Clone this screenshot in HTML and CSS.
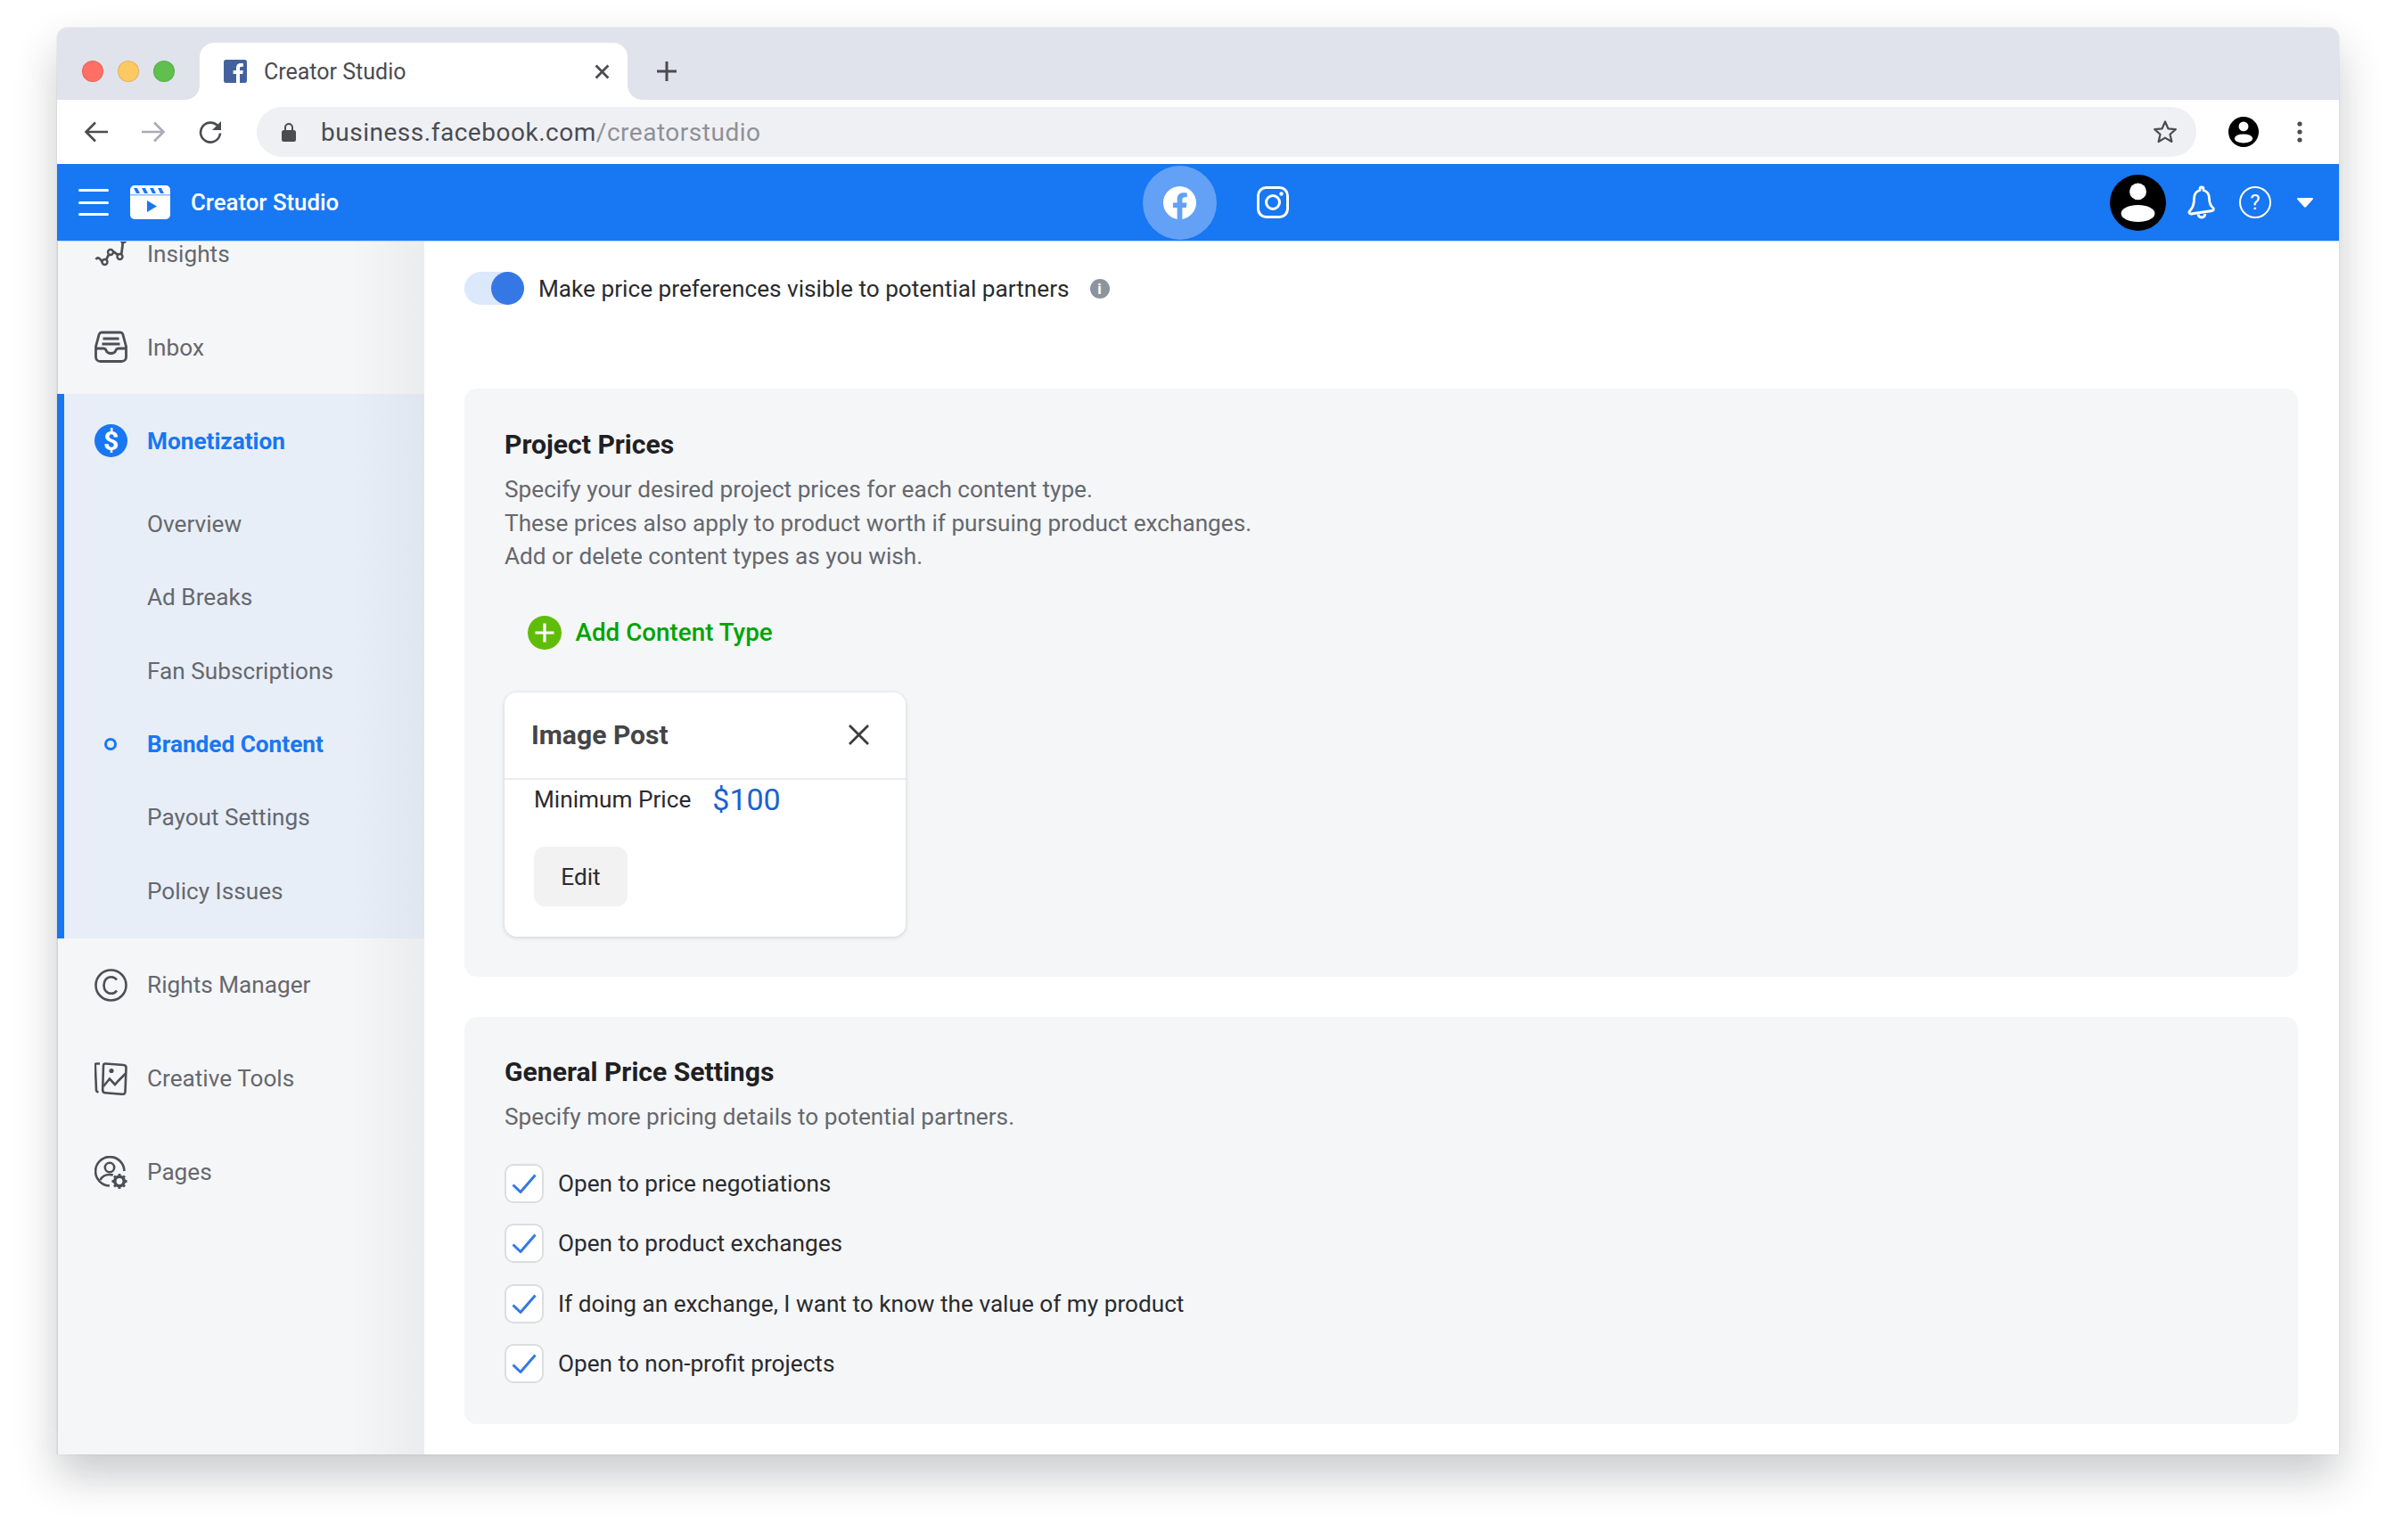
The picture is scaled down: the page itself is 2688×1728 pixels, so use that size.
FILE: index.html
```html
<!DOCTYPE html>
<html lang="en">
<head>
<meta charset="utf-8">
<title>Creator Studio</title>
<link rel="stylesheet" href="styles.css">
</head>
<body>
<div class="window">
  <div class="tabstrip">
    <div class="lights"><span class="light red"></span><span class="light yellow"></span><span class="light green"></span></div>
    <div class="tab">
      <svg class="tab-fb" viewBox="0 0 26 26"><rect width="26" height="26" rx="2.5" fill="#45619d"/><path d="M18 26V16h3.3l.5-4H18V9.6c0-1.1.4-1.9 2-1.9h2V4.2c-.4 0-1.600-.2-3-.2-3 0-5 1.800-5 5.100V12h-3.400v4H14v10z" fill="#fff"/></svg>
      <span class="tab-title">Creator Studio</span>
      <svg class="tab-close" viewBox="0 0 16 16"><path d="M1.500 1.500l13 13M14.500 1.500l-13 13" stroke="#4b4c50" stroke-width="2.600" fill="none"/></svg>
    </div>
    <svg class="new-tab" viewBox="0 0 24 24"><path d="M12 1v22M1 12h22" stroke="#4b4c50" stroke-width="3" fill="none"/></svg>
  </div>

  <div class="toolbar">
    <span class="tool"><svg class="tool-ic" viewBox="0 0 28 28"><path d="M27 14H3M13 3.500L2.500 14 13 24.500" stroke="#4b4c50" stroke-width="2.600" fill="none"/></svg></span>
    <span class="tool"><svg class="tool-ic" viewBox="0 0 28 28"><path d="M1 14h24M15 3.500L25.500 14 15 24.500" stroke="#a9acb6" stroke-width="2.600" fill="none"/></svg></span>
    <span class="tool"><svg class="tool-ic" viewBox="0 0 28 28"><path d="M23.500 9A11 11 0 1 0 25 15.500" stroke="#4b4c50" stroke-width="2.600" fill="none"/><path d="M26 2v10H16z" fill="#4b4c50"/></svg></span>
    <div class="omnibox">
      <svg class="lock" viewBox="0 0 16 22"><path d="M4 10V6a4 4 0 0 1 8 0v4" stroke="#4b4c50" stroke-width="2" fill="none"/><rect y="9" width="16" height="13" rx="2.500" fill="#4b4c50"/></svg>
      <span class="url">business.facebook.com<span class="url-path">/creatorstudio</span></span>
      <svg class="star" viewBox="0 0 28 28"><path d="M14 2.500l3.400 7.800 8.400.8-6.300 5.600 1.900 8.300L14 20.600 6.600 25l1.900-8.300L2.200 11.100l8.400-.8z" stroke="#4b4c50" stroke-width="2.200" fill="none" stroke-linejoin="round"/></svg>
    </div>
    <span class="tool tool-account"><svg class="acct-small" viewBox="0 0 100 100"><circle cx="50" cy="50" r="50" fill="#000"/><circle cx="50" cy="32" r="16" fill="#fff"/><ellipse cx="50" cy="72" rx="30" ry="15" fill="#fff"/></svg></span>
    <span class="tool"><svg class="dots" viewBox="0 0 6 24"><circle cx="3" cy="3" r="2.600" fill="#4b4c50"/><circle cx="3" cy="12" r="2.600" fill="#4b4c50"/><circle cx="3" cy="21" r="2.600" fill="#4b4c50"/></svg></span>
  </div>

  <header class="appbar">
    <div class="brand">
      <span class="burger"><i></i><i></i><i></i></span>
      <svg class="clap" viewBox="0 0 45 38"><rect width="45" height="38" rx="5" fill="#fff"/><path d="M4 3h4l3 6H7zM13 3h4l3 6h-4zM22 3h4l3 6h-4zM31 3h4l3 6h-4z" fill="#1877f2"/><rect x="0" y="10" width="45" height="1.500" fill="#1877f2" opacity=".5"/><path d="M19 17l11 6.500L19 30z" fill="#1877f2"/></svg>
      <span class="brand-name">Creator Studio</span>
    </div>
    <span class="platform-on"><svg class="fb-round" viewBox="0 0 24 24"><path fill="#fff" d="M24 12.073c0-6.627-5.373-12-12-12s-12 5.373-12 12c0 5.990 4.388 10.954 10.125 11.854v-8.385H7.078v-3.470h3.047V9.430c0-3.007 1.792-4.669 4.533-4.669 1.312 0 2.686.235 2.686.235v2.953H15.830c-1.491 0-1.956.925-1.956 1.874v2.250h3.328l-.532 3.470h-2.796v8.385C19.612 23.027 24 18.062 24 12.073z"/></svg></span>
    <svg class="ig" viewBox="0 0 36 36"><rect x="1.500" y="1.500" width="33" height="33" rx="9" stroke="#fff" stroke-width="3" fill="none"/><circle cx="18" cy="18" r="7.500" stroke="#fff" stroke-width="3" fill="none"/><circle cx="27.500" cy="8.500" r="2.200" fill="#fff"/></svg>
    <div class="app-actions">
      <svg class="avatar" viewBox="0 0 100 100"><circle cx="50" cy="50" r="50" fill="#000"/><ellipse cx="50" cy="30" rx="15" ry="15" fill="#fff"/><ellipse cx="50" cy="69" rx="30" ry="15" fill="#fff"/></svg>
      <svg class="bell" viewBox="0 0 32 38"><path d="M16 2c1.200 0 2 .8 2 2v1.500c4.500 1.200 6.500 5 6.500 9.500 0 5 1.500 8 4.500 10.500.9 1.300.3 2.500-1.100 3L4 32c-1.600 0-2.600-1.500-1.800-2.800C5.500 26 7.500 21.500 7.500 15c0-4.500 2-8.300 6.500-9.500V4c0-1.200.8-2 2-2z" stroke="#fff" stroke-width="2.800" fill="none" stroke-linejoin="round"/><path d="M12 32.500c.5 2.500 2 3.500 4 3.500s3.500-1.200 4-4" stroke="#fff" stroke-width="2.800" fill="none"/></svg>
      <span class="help">?</span>
      <svg class="caret" viewBox="0 0 18 11"><path d="M1 0h16c1 0 1.300 1 .7 1.700L10 10.300c-.5.600-1.500.6-2 0L.3 1.700C-.3 1 0 0 1 0z" fill="#fff"/></svg>
    </div>
  </header>

  <div class="workspace">
    <nav class="sidebar">
      <ul class="nav">
        <li class="nav-item">
          <svg class="nav-ic" viewBox="0 0 37 37"><path d="M1.500 25c2-2.500 3.500-2 5 0s3.500 4 5 3 3.500-8 6.500-11 6.500 2 10.500 5c1.500 1 2.800-9 3.500-19" stroke="#4b4f56" stroke-width="2.800" fill="none"/><circle cx="11.500" cy="28" r="3" fill="#f5f6f7" stroke="#4b4f56" stroke-width="2.400"/><circle cx="18" cy="17" r="3" fill="#f5f6f7" stroke="#4b4f56" stroke-width="2.400"/><circle cx="28.500" cy="22" r="3" fill="#f5f6f7" stroke="#4b4f56" stroke-width="2.400"/><circle cx="32.500" cy="3" r="3" fill="#f5f6f7" stroke="#4b4f56" stroke-width="2.400"/></svg>
          <span>Insights</span>
        </li>
        <li class="nav-item">
          <svg class="nav-ic" viewBox="0 0 37 37"><path d="M8 2h21c1.500 0 2.300.8 2.800 2l3.700 14v11.500c0 3-2 5-5 5H6.500c-3 0-5-2-5-5V18L5.200 4C5.700 2.800 6.500 2 8 2z" stroke="#4b4f56" stroke-width="2.800" fill="none"/><path d="M2 20h8c1.500 0 2.500.8 3 2 .8 2.500 2.500 3.500 5.500 3.500S23.200 24.500 24 22c.5-1.200 1.500-2 3-2h8" stroke="#4b4f56" stroke-width="2.800" fill="none"/><path d="M9.500 9h18M8.500 15h20" stroke="#4b4f56" stroke-width="2.800" fill="none"/></svg>
          <span>Inbox</span>
        </li>
        <li class="nav-group">
          <div class="nav-item nav-active">
            <span class="dollar">$</span>
            <span>Monetization</span>
          </div>
          <ul class="subnav">
            <li class="sub-item"><span class="slot"></span><span>Overview</span></li>
            <li class="sub-item"><span class="slot"></span><span>Ad Breaks</span></li>
            <li class="sub-item"><span class="slot"></span><span>Fan Subscriptions</span></li>
            <li class="sub-item sub-active"><span class="slot"><i class="ring"></i></span><span>Branded Content</span></li>
            <li class="sub-item"><span class="slot"></span><span>Payout Settings</span></li>
            <li class="sub-item"><span class="slot"></span><span>Policy Issues</span></li>
          </ul>
        </li>
        <li class="nav-item">
          <svg class="nav-ic" viewBox="0 0 37 37"><circle cx="18.500" cy="18.500" r="17" stroke="#4b4f56" stroke-width="2.600" fill="none"/><path d="M25 12.500c-1.500-2.200-3.800-3.300-6.300-3.300-5 0-8.200 4-8.200 9.300s3.200 9.300 8.200 9.300c2.500 0 4.800-1.100 6.300-3.300" stroke="#4b4f56" stroke-width="2.600" fill="none"/></svg>
          <span>Rights Manager</span>
        </li>
        <li class="nav-item">
          <svg class="nav-ic" viewBox="0 0 37 37"><path d="M6 1.500H2c-.8 0-1.200.5-1.200 1.300L2 31c0 1.500.5 2 2.500 2.500" stroke="#4b4f56" stroke-width="2.600" fill="none"/><path d="M12.500 1.500l20 1.500c2 .2 3 1.300 3 3l-1 27c-.1 2-1.300 3-3.300 2.800L12 34.300c-2-.2-2.800-1.300-2.800-3.300L10 3.500c.1-1.500 1-2.100 2.500-2z" stroke="#4b4f56" stroke-width="2.600" fill="none"/><path d="M10 27l7-8.500 6 6.500 4-4.500 8-8" stroke="#4b4f56" stroke-width="2.600" fill="none"/><circle cx="19" cy="9.500" r="2.600" fill="#4b4f56"/></svg>
          <span>Creative Tools</span>
        </li>
        <li class="nav-item">
          <svg class="nav-ic" viewBox="0 0 37 37"><path d="M33.500 17A16.200 16.200 0 1 0 17 33.500" stroke="#4b4f56" stroke-width="2.600" fill="none"/><circle cx="17" cy="13" r="5.200" stroke="#4b4f56" stroke-width="2.600" fill="none"/><path d="M6.500 27c2-4 5.500-6 10.500-6 1.500 0 2.500.2 3.800.6" stroke="#4b4f56" stroke-width="2.600" fill="none"/><circle cx="28" cy="28.500" r="5.200" stroke="#4b4f56" stroke-width="3.600" fill="none"/><path d="M28 20v4M28 33v4M19.500 28.500h4M32.500 28.500h4M22 22.500l3 3M31 31.500l3 3M34 22.500l-3 3M25 31.500l-3 3" stroke="#4b4f56" stroke-width="2.800"/></svg>
          <span>Pages</span>
        </li>
      </ul>
    </nav>

    <main class="content">
      <div class="visibility">
        <span class="toggle"><i class="knob"></i></span>
        <span class="visibility-label">Make price preferences visible to potential partners</span>
        <span class="info">i</span>
      </div>

      <section class="panel panel-prices">
        <h2 class="panel-title">Project Prices</h2>
        <p class="panel-desc">Specify your desired project prices for each content type.<br>These prices also apply to product worth if pursuing product exchanges.<br>Add or delete content types as you wish.</p>
        <div class="add-type">
          <svg class="add-ic" viewBox="0 0 38 38"><circle cx="19" cy="19" r="19" fill="#5fbd0a"/><path d="M19 8.500v21M8.500 19h21" stroke="#fff" stroke-width="3.200"/></svg>
          <span>Add Content Type</span>
        </div>
        <article class="price-card">
          <div class="price-card-head">
            <span class="price-card-title">Image Post</span>
            <svg class="card-close" viewBox="0 0 23 23"><path d="M1 1l21 21M22 1L1 22" stroke="#3a3b3f" stroke-width="2.800" fill="none"/></svg>
          </div>
          <div class="price-card-body">
            <div class="price-row"><span class="price-label">Minimum Price</span><span class="price-value">$100</span></div>
            <button class="edit-btn" type="button">Edit</button>
          </div>
        </article>
      </section>

      <section class="panel panel-general">
        <h2 class="panel-title">General Price Settings</h2>
        <p class="panel-desc">Specify more pricing details to potential partners.</p>
        <ul class="checks">
          <li class="check-row"><span class="checkbox"><svg class="tick" viewBox="0 0 28 22"><path d="M1.500 12.500L10 20.500 26.500 1.500" stroke="#3578e5" stroke-width="3" fill="none"/></svg></span><span>Open to price negotiations</span></li>
          <li class="check-row"><span class="checkbox"><svg class="tick" viewBox="0 0 28 22"><path d="M1.500 12.500L10 20.500 26.500 1.500" stroke="#3578e5" stroke-width="3" fill="none"/></svg></span><span>Open to product exchanges</span></li>
          <li class="check-row"><span class="checkbox"><svg class="tick" viewBox="0 0 28 22"><path d="M1.500 12.500L10 20.500 26.500 1.500" stroke="#3578e5" stroke-width="3" fill="none"/></svg></span><span>If doing an exchange, I want to know the value of my product</span></li>
          <li class="check-row"><span class="checkbox"><svg class="tick" viewBox="0 0 28 22"><path d="M1.500 12.500L10 20.500 26.500 1.500" stroke="#3578e5" stroke-width="3" fill="none"/></svg></span><span>Open to non-profit projects</span></li>
        </ul>
      </section>
    </main>
  </div>
</div>
</body>
</html>
```
FILE: styles.css
```css
* { box-sizing: border-box; }
html, body { margin: 0; padding: 0; background: #fff; }
body {
  width: 2688px;
  height: 1728px;
  padding: 31px 64px 96px;
  overflow: hidden;
  font-family: Roboto, "Liberation Sans", sans-serif;
  color: #1c1e21;
}
ul { list-style: none; margin: 0; padding: 0; }
svg { display: block; flex: none; }
i { display: block; }

.window {
  height: 1601px;
  display: flex;
  flex-direction: column;
  background: #fff;
  border-radius: 12px 12px 0 0;
  box-shadow: 0 24px 48px rgba(30, 32, 40, .24), 0 0 1px rgba(0, 0, 0, .35);
}

/* Browser chrome */
.tabstrip {
  height: 81px;
  flex: none;
  display: flex;
  align-items: flex-end;
  background: #e0e3eb;
  border-radius: 12px 12px 0 0;
}
.lights { display: flex; gap: 16px; height: 64px; align-items: center; padding: 0 28px; }
.light { width: 24px; height: 24px; border-radius: 50%; border: 1px solid rgba(0, 0, 0, .1); }
.red { background: #ff6f63; }
.yellow { background: #fdc963; }
.green { background: #5fc04f; }
.tab {
  position: relative;
  width: 480px;
  height: 64px;
  display: flex;
  align-items: center;
  padding: 0 20px 0 27px;
  background: #fff;
  border-radius: 16px 16px 0 0;
}
.tab::before, .tab::after {
  content: "";
  position: absolute;
  bottom: 0;
  width: 16px;
  height: 16px;
  background: radial-gradient(circle at var(--cx) 0, #e0e3eb 15.500px, #fff 16px);
}
.tab::before { left: -16px; --cx: 0; }
.tab::after { right: -16px; --cx: 16px; }
.tab-fb { width: 26px; height: 26px; }
.tab-title { margin-left: 19px; flex: 1; font-size: 25px; color: #4b4c50; }
.tab-close { width: 17px; height: 17px; }
.new-tab { width: 24px; height: 24px; margin: 0 0 20px 32px; }

.toolbar {
  height: 72px;
  flex: none;
  display: flex;
  align-items: center;
  padding: 0 12px 0 12px;
  background: #fff;
}
.tool { width: 64px; height: 56px; display: flex; align-items: center; justify-content: center; flex: none; }
.tool-ic { width: 28px; height: 28px; }
.omnibox {
  flex: 1;
  height: 56px;
  margin-left: 20px;
  display: flex;
  align-items: center;
  padding: 0 21px 0 28px;
  background: #eff0f4;
  border-radius: 28px;
}
.lock { width: 16px; height: 22px; }
.url { margin-left: 28px; flex: 1; font-size: 28px; letter-spacing: .52px; color: #4b4c50; }
.url-path { color: #8e9097; }
.star { width: 28px; height: 28px; }
.tool-account { margin-left: 22px; width: 62px; }
.acct-small { width: 34px; height: 34px; }
.dots { width: 6px; height: 24px; }

.appbar {
  height: 87px;
  flex: none;
  display: flex;
  align-items: center;
  padding-right: 29px;
  background: #1877f2;
  border-bottom: 1px solid #b9d6fb;
  color: #fff;
}
.brand { width: 1218px; flex: none; display: flex; align-items: center; gap: 24px; padding-left: 24px; }
.burger { width: 34px; display: flex; flex-direction: column; gap: 10.500px; }
.burger i { height: 3px; background: #fff; border-radius: 2px; }
.clap { width: 45px; height: 38px; }
.brand-name { font-size: 25.800px; font-weight: 500; margin-left: -1px; }
.platform-on {
  width: 83px;
  height: 83px;
  display: flex;
  align-items: center;
  justify-content: center;
  background: #62a1f6;
  border-radius: 50%;
}
.fb-round { width: 37px; height: 37px; }
.ig { width: 36px; height: 36px; margin-left: 45px; }
.app-actions { margin-left: auto; display: flex; align-items: center; }
.avatar { width: 63px; height: 63px; }
.bell { width: 32px; height: 38px; margin-left: 24px; }
.help {
  width: 36px;
  height: 36px;
  margin-left: 26px;
  display: flex;
  align-items: center;
  justify-content: center;
  border: 2.500px solid #fff;
  border-radius: 50%;
  font-size: 24px;
  line-height: 1;
}
.caret { width: 18px; height: 11px; margin-left: 29px; }

/* Workspace */
.workspace { flex: 1; min-height: 0; display: flex; overflow: hidden; }
.sidebar {
  width: 412px;
  flex: none;
  background: linear-gradient(to right, #f5f6f8 80%, #ebecee 100%);
  border-left: 1px solid #d4d5d8;
  font-size: 26.200px;
  color: #65686e;
}
.nav { margin: -39px 0 0 -1px; }
.nav-item { height: 105px; display: flex; align-items: center; gap: 22px; padding-left: 42px; }
.nav-ic { width: 37px; height: 37px; }
.nav-group {
  padding-bottom: 12px;
  background: linear-gradient(to right, #e8eef7 80%, #dfe6f0 100%);
  box-shadow: inset 8px 0 0 #1877f2;
}
.nav-active { color: #1877f2; font-weight: 700; }
.dollar {
  width: 37px;
  height: 37px;
  display: flex;
  align-items: center;
  justify-content: center;
  background: #1877f2;
  border-radius: 50%;
  color: #fff;
  font-size: 30px;
  font-weight: 700;
}
.sub-item { height: 82.300px; display: flex; align-items: center; gap: 22px; padding-left: 42px; }
.slot { width: 37px; display: flex; justify-content: center; }
.ring { width: 14px; height: 14px; border: 3.500px solid #1877f2; border-radius: 50%; margin-left: -1px; }
.sub-active { color: #1877f2; font-weight: 700; }

.content { flex: 1; min-width: 0; padding: 34px 46px 0 45px; background: #fff; }
.visibility { display: flex; align-items: center; height: 37px; font-size: 26.200px; color: #2a2b2e; }
.toggle { width: 67px; height: 37px; display: flex; justify-content: flex-end; background: #dce8fb; border-radius: 19px; }
.knob { width: 37px; height: 37px; background: #3578e5; border-radius: 50%; }
.visibility-label { margin-left: 16px; }
.info {
  width: 22px;
  height: 22px;
  margin-left: 23px;
  display: flex;
  align-items: center;
  justify-content: center;
  background: #8d949e;
  border-radius: 50%;
  color: #fff;
  font-size: 17px;
  font-weight: 700;
}

.panel { background: #f5f6f7; border-radius: 14px; padding-left: 45px; }
.panel-prices { margin-top: 94px; height: 660px; padding-top: 44px; }
.panel-general { margin-top: 45px; height: 457px; padding-top: 43px; }
.panel-title { margin: 0; font-size: 30.100px; line-height: 38px; font-weight: 700; color: #1f2023; }
.panel-desc { margin: 13px 0 0; font-size: 26.200px; line-height: 37.500px; color: #65686e; }

.add-type {
  margin: 47px 0 0 26px;
  height: 38px;
  display: flex;
  align-items: center;
  gap: 15.500px;
  font-size: 27.800px;
  font-weight: 500;
  color: #00a400;
}
.add-ic { width: 38px; height: 38px; }

.price-card {
  width: 450px;
  height: 274px;
  margin-top: 48px;
  background: #fff;
  border-radius: 14px;
  box-shadow: 0 1px 5px rgba(0, 0, 0, .16);
}
.price-card-head {
  height: 98px;
  display: flex;
  align-items: center;
  justify-content: space-between;
  padding: 0 41px 0 30px;
  border-bottom: 2px solid #ececee;
}
.price-card-title { font-size: 30.100px; font-weight: 700; color: #444548; }
.card-close { width: 23px; height: 23px; }
.price-card-body { padding-left: 33px; }
.price-row { height: 44px; display: flex; align-items: center; gap: 24px; }
.price-label { font-size: 26.200px; color: #2a2b2e; }
.price-value { font-size: 34px; color: #1b62d0; }
.edit-btn {
  width: 105px;
  height: 67px;
  margin-top: 31px;
  padding: 2px 0 0;
  display: block;
  border: 0;
  border-radius: 12px;
  background: #f2f2f2;
  font: 26.200px Roboto, "Liberation Sans", sans-serif;
  color: #2b2c2f;
}

.checks { margin-top: 33px; display: flex; flex-direction: column; gap: 23.500px; }
.check-row { display: flex; align-items: center; gap: 16px; font-size: 26.200px; color: #2a2b2e; }
.checkbox {
  width: 44px;
  height: 44px;
  display: flex;
  align-items: center;
  justify-content: center;
  background: #fff;
  border: 2px solid #dcdde0;
  border-radius: 10px;
}
.tick { width: 28px; height: 22px; }
```
